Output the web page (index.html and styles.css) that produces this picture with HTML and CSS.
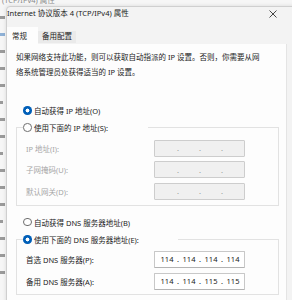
FILE: index.html
```html
<!DOCTYPE html>
<html lang="zh-CN">
<head>
  <meta charset="UTF-8" />
  <title>Internet 协议版本 4 (TCP/IPv4) 属性</title>
  <link rel="stylesheet" href="styles.css">
</head>
<body>
  <!-- window behind the dialog, only its edges show -->
  <div class="behind">
    <div class="behind-title">(TCP/IPv4) 属性</div>
    <div class="behind-marks">
      <span></span><span class="blue"></span><span></span><span></span><span></span><span class="short"></span><span></span><span></span><span class="short"></span><span></span><span></span><span></span><span class="short"></span><span></span><span></span><span></span>
    </div>
  </div>

  <div class="dialog">
    <div class="titlebar">
      <span class="title">Internet 协议版本 4 (TCP/IPv4) 属性</span>
      <svg class="close" width="8" height="8" viewBox="0 0 8 8">
        <path d="M0.5 0.5 L7.5 7.5 M7.5 0.5 L0.5 7.5" stroke="#333" stroke-width="0.9" fill="none"/>
      </svg>
    </div>

    <div class="tabs">
      <div class="tab active">常规</div>
      <div class="tab">备用配置</div>
    </div>

    <div class="panel">
      <p class="intro">如果网络支持此功能，则可以获取自动指派的 IP 设置。否则，你需要从网<br>络系统管理员处获得适当的 IP 设置。</p>

      <div class="opt first">
        <span class="radio checked"></span><span>自动获得 IP 地址(O)</span>
      </div>

      <div class="group group-ip">
        <div class="opt head head-ip">
          <span class="radio"></span><span>使用下面的 IP 地址(S):</span>
        </div>
        <div class="rows rows-ip">
          <div class="field disabled">
            <span class="label">IP 地址(I):</span>
            <div class="ipbox"><span class="seg"></span><span class="dot">.</span><span class="seg"></span><span class="dot">.</span><span class="seg"></span><span class="dot">.</span><span class="seg"></span></div>
          </div>
          <div class="field disabled">
            <span class="label">子网掩码(U):</span>
            <div class="ipbox"><span class="seg"></span><span class="dot">.</span><span class="seg"></span><span class="dot">.</span><span class="seg"></span><span class="dot">.</span><span class="seg"></span></div>
          </div>
          <div class="field disabled">
            <span class="label">默认网关(D):</span>
            <div class="ipbox"><span class="seg"></span><span class="dot">.</span><span class="seg"></span><span class="dot">.</span><span class="seg"></span><span class="dot">.</span><span class="seg"></span></div>
          </div>
        </div>
      </div>

      <div class="opt after-group">
        <span class="radio"></span><span>自动获得 DNS 服务器地址(B)</span>
      </div>

      <div class="group group-dns">
        <div class="opt head head-dns">
          <span class="radio checked"></span><span>使用下面的 DNS 服务器地址(E):</span>
        </div>
        <div class="rows rows-dns">
          <div class="field">
            <span class="label">首选 DNS 服务器(P):</span>
            <div class="ipbox"><span class="seg">114</span><span class="dot">.</span><span class="seg">114</span><span class="dot">.</span><span class="seg">114</span><span class="dot">.</span><span class="seg">114</span></div>
          </div>
          <div class="field">
            <span class="label">备用 DNS 服务器(A):</span>
            <div class="ipbox"><span class="seg">114</span><span class="dot">.</span><span class="seg">114</span><span class="dot">.</span><span class="seg">115</span><span class="dot">.</span><span class="seg">115</span></div>
          </div>
        </div>
      </div>
    </div>
  </div>
</body>
</html>
```

FILE: styles.css
```css
* {
  box-sizing: border-box;
}
html, body {
  margin: 0;
}
body {
  position: relative;
  width: 292px;
  height: 300px;
  overflow: hidden;
  background: #f4f4f4;
  font-family: "Noto Sans", "Noto Sans CJK SC", sans-serif;
  font-size: 7.5px;
  color: #1b1b1b;
}

/* Window behind the dialog */
.behind {
  position: absolute;
  left: 0;
  top: 0;
  width: 292px;
  height: 300px;
  background: #f6f6f6;
}
.behind-title {
  position: absolute;
  left: 2px;
  top: -4px;
  line-height: 9px;
  color: #8a8a8a;
}
.behind-marks {
  position: absolute;
  left: 0;
  top: 16px;
  display: flex;
  flex-direction: column;
  gap: 14px;
}
.behind-marks span {
  display: block;
  width: 5px;
  height: 3px;
  background: #9a9a9a;
}
.behind-marks .short {
  width: 3px;
}
.behind-marks .blue {
  background: #8fb1d6;
}

/* Dialog */
.dialog {
  position: absolute;
  left: 6px;
  top: 6px;
  width: 300px;
  height: 300px;
  background: #f3f3f3;
  border: 1px solid #cfcfcf;
  border-radius: 4px 0 0 0;
  box-shadow: 0 0 4px rgba(0, 0, 0, 0.12);
}
.titlebar {
  display: flex;
  justify-content: space-between;
  align-items: flex-start;
  height: 20px;
  padding-right: 28px;
}
.title {
  line-height: 13px;
  color: #1b1b1b;
}
.close {
  margin-top: 3px;
}

.tabs {
  display: flex;
  align-items: flex-start;
  height: 17px;
}
.tab {
  line-height: 10px;
  height: 12px;
  margin-top: 4px;
  padding: 0 4px 0 4px;
  background: #eaeaea;
  color: #1b1b1b;
}
.tab.active {
  width: 31px;
  height: 17px;
  margin-top: 0;
  padding: 2px 0 0 5px;
  line-height: 14px;
  background: #fdfdfd;
}

.panel {
  width: 280px;
  height: 260px;
  background: #fdfdfd;
  border-right: 1px solid #e4e4e4;
}
.intro {
  margin: 0;
  padding: 6px 0 0 9px;
  line-height: 15px;
  white-space: nowrap;
}

/* Radio rows */
.opt {
  display: flex;
  align-items: center;
  gap: 2.5px;
  height: 16px;
  padding-left: 16px;
  white-space: nowrap;
}
.opt.first {
  margin-top: 22.5px;
}
.opt.after-group {
  margin-top: 8.5px;
}
.radio {
  flex: none;
  width: 8.5px;
  height: 8.5px;
  border: 1px solid #6e6e6e;
  border-radius: 50%;
  background: #fff;
}
.radio.checked {
  border: none;
  background: radial-gradient(circle, #fff 0 1.7px, #005fb8 2.2px);
}

/* Group boxes */
.group {
  width: 263px;
  margin-left: 9px;
  border: 1px solid #e2e2e2;
}
.group-ip {
  margin-top: 8.5px;
  padding-bottom: 5px;
}
.group-dns {
  margin-top: 9px;
  padding-bottom: 4px;
}
.opt.head {
  margin-top: -8.5px;
  margin-left: 6px;
  padding-left: 0;
  background: #fdfdfd;
}
.head-ip {
  width: 125px;
}
.head-dns {
  width: 155px;
}

.rows {
  display: flex;
  flex-direction: column;
}
.rows-ip {
  margin-top: 4px;
  gap: 4.5px;
}
.rows-dns {
  margin-top: 3px;
  gap: 5px;
}
.field {
  display: flex;
  align-items: center;
  height: 17px;
}
.label {
  width: 137px;
  padding-left: 9px;
  white-space: nowrap;
}
.field.disabled .label {
  color: #a6a6a6;
}

/* IP address boxes */
.ipbox {
  display: flex;
  align-items: center;
  width: 91px;
  height: 17px;
  padding-left: 5px;
  background: #ffffff;
  border: 1px solid #c8c8c8;
  border-bottom-color: #b3b3b3;
  border-radius: 1px;
  color: #1b1b1b;
}
.seg {
  width: 14px;
  text-align: center;
}
.dot {
  width: 8px;
  text-align: center;
}
.field.disabled .ipbox {
  background: #f0f0f0;
  border-color: #cdcdcd;
  color: #9a9a9a;
}
```
